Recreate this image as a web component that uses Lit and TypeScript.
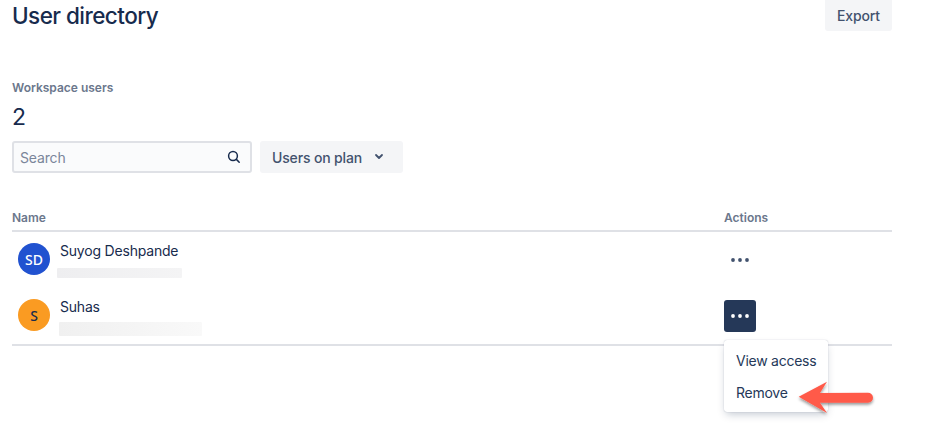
import { LitElement, html, css } from "lit";
import { customElement } from "lit/decorators.js";

const dots = html`<svg class="dots" width="20" height="6" viewBox="0 0 20 6" fill="currentColor"><circle cx="3" cy="3" r="1.9"/><circle cx="10" cy="3" r="1.9"/><circle cx="17" cy="3" r="1.9"/></svg>`;

@customElement("app-root")
export class AppRoot extends LitElement {
  static styles = css`
    :host { display: block; width: 934px; height: 435px; overflow: hidden; background: #fff; font-family: Inter, "Noto Sans", sans-serif; color: #172B4D; position: relative; }
    .page { width: 880px; margin-left: 12px; display: flex; flex-direction: column; }
    .top { display: flex; justify-content: space-between; align-items: flex-start; height: 31px; }
    h1 { margin: 0; font-size: 22.5px; line-height: 32px; font-weight: 500; letter-spacing: -0.55px; }
    .export { width: 67px; height: 31px; background: #F4F5F7; border-radius: 0 0 3px 3px; color: #42526E; font-size: 14px; letter-spacing: -0.15px; font-weight: 500; display: flex; align-items: center; justify-content: center; }
    .label { margin-top: 49px; font-size: 12px; line-height: 16px; font-weight: 600; color: #6B778C; }
    .count { margin-top: 6px; font-size: 23px; line-height: 30px; font-weight: 400; }
    .filters { margin-top: 9px; display: flex; gap: 8px; }
    .search { box-sizing: border-box; width: 240px; height: 32px; border: 2px solid #DFE1E6; border-radius: 3px; background: #FAFBFC; display: flex; align-items: center; justify-content: space-between; padding: 0 8px 0 6px; font-size: 14px; letter-spacing: -0.15px; color: #7A869A; }
    .plan { box-sizing: border-box; width: 143px; height: 32px; background: #F4F5F7; border-radius: 3px; display: flex; align-items: center; gap: 12px; padding-left: 12px; font-size: 14px; letter-spacing: -0.15px; font-weight: 500; color: #42526E; }
    .table { margin-top: 37px; }
    .row { display: grid; grid-template-columns: 712px 1fr; }
    .head { font-size: 12px; line-height: 16px; font-weight: 600; color: #6B778C; padding-bottom: 4px; border-bottom: 2px solid #DFE1E6; }
    .body { padding-top: 11px; padding-bottom: 13px; border-bottom: 2px solid #DFE1E6; display: flex; flex-direction: column; gap: 24px; }
    .user { height: 32px; }
    .who { display: flex; gap: 10px; padding-left: 6px; }
    .avatar { width: 32px; height: 32px; border-radius: 50%; display: flex; align-items: center; justify-content: center; font-size: 14px; font-weight: 500; font-family: "Noto Sans", sans-serif; }
    .blue { background: #2152D0; color: #fff; }
    .orange { background: #FA9B22; color: #172B4D; }
    .info { position: relative; }
    .name { font-size: 14px; letter-spacing: -0.2px; line-height: 16px; color: #172B4D; }
    .mask { position: absolute; border-radius: 1px; }
    .m1 { left: -3px; top: 25px; width: 125px; height: 10px; background: linear-gradient(90deg, #EEEEF0, #F4F4F5); }
    .m2 { left: -1px; top: 23px; width: 143px; height: 14px; background: linear-gradient(90deg, #F0F0F0, #F9F9F9); }
    .act { width: 32px; height: 32px; margin-top: 1px; border-radius: 3px; display: flex; align-items: center; justify-content: center; color: #42526E; }
    .act.on { background: #253858; color: #fff; }
    .menu { position: absolute; left: 724px; top: 340px; width: 104px; height: 72px; box-sizing: border-box; background: #fff; border-radius: 3px; box-shadow: 0 4px 8px -2px rgba(9,30,66,.25), 0 0 1px rgba(9,30,66,.31); padding: 5px 0; font-size: 14px; letter-spacing: -0.25px; color: #253858; }
    .menu div { height: 32px; line-height: 32px; padding-left: 12px; }
    .arrow { position: absolute; left: 795px; top: 376px; overflow: visible; }
  `;

  render() {
    return html`
      <div class="page">
        <div class="top">
          <h1>User directory</h1>
          <div class="export">Export</div>
        </div>
        <div class="label">Workspace users</div>
        <div class="count">2</div>
        <div class="filters">
          <div class="search">
            <span>Search</span>
            <svg width="16" height="16" viewBox="0 0 16 16" fill="none" stroke="#172B4D" stroke-width="1.5" stroke-linecap="round"><circle cx="7" cy="7" r="4.4"/><path d="M10.4 10.4 13.2 13.2"/></svg>
          </div>
          <div class="plan">
            <span>Users on plan</span>
            <svg width="10" height="8" viewBox="0 0 10 8" fill="none" stroke="#42526E" stroke-width="1.8" stroke-linecap="round" stroke-linejoin="round"><path d="M2 2 5 5 8 2"/></svg>
          </div>
        </div>
        <div class="table">
          <div class="row head"><span>Name</span><span>Actions</span></div>
          <div class="body">
            <div class="row user">
              <div class="who">
                <div class="avatar blue">SD</div>
                <div class="info"><div class="name">Suyog Deshpande</div><div class="mask m1"></div></div>
              </div>
              <div class="act">${dots}</div>
            </div>
            <div class="row user">
              <div class="who">
                <div class="avatar orange">S</div>
                <div class="info"><div class="name">Suhas</div><div class="mask m2"></div></div>
              </div>
              <div class="act on">${dots}</div>
            </div>
          </div>
        </div>
      </div>
      <div class="menu"><div>View access</div><div>Remove</div></div>
      <svg class="arrow" width="80" height="40" viewBox="0 0 80 40">
        <defs><filter id="s" x="-20%" y="-30%" width="140%" height="170%"><feDropShadow dx="0" dy="2" stdDeviation="1.5" flood-color="#000" flood-opacity=".4"/></filter></defs>
        <path filter="url(#s)" d="M3.7 20.7 32 5.7 25 17 73 16.7a5 5 0 0 1 0 10L25 26.7 32 37Z" fill="#FF5A4A"/>
      </svg>
    `;
  }
}
